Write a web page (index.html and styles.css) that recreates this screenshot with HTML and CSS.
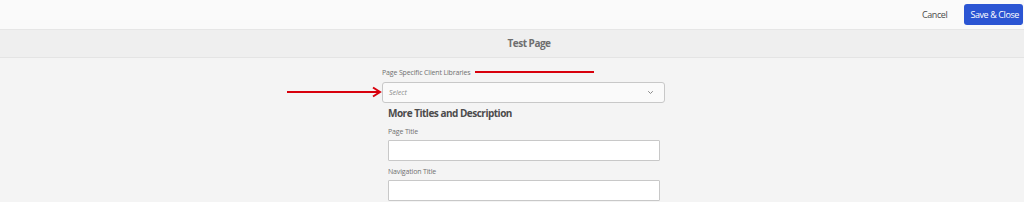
FILE: index.html
```html
<!DOCTYPE html>
<html lang="en">
<head>
  <meta charset="UTF-8">
  <title>Test Page - Properties</title>
  <link rel="stylesheet" href="styles.css">
</head>
<body>
  <div class="top-bar">
    <button class="btn-cancel">Cancel</button>
    <button class="btn-save">Save &amp; Close</button>
  </div>

  <div class="title-bar">Test Page</div>

  <div class="form-area">
    <div class="form">
      <label class="field-label">Page Specific Client Libraries</label>
      <div class="select">
        <span class="placeholder">Select</span>
        <svg class="chevron" width="7" height="5" viewBox="0 0 7 5">
          <path d="M1.2 1.2 L3.5 3.5 L5.8 1.2" fill="none" stroke="#8a8a8a" stroke-width="1"/>
        </svg>
      </div>

      <div class="section">
        <h3>More Titles and Description</h3>
        <label class="field-label">Page Title</label>
        <div class="text-input"></div>
        <label class="field-label">Navigation Title</label>
        <div class="text-input"></div>
      </div>
    </div>

    <!-- annotations -->
    <div class="mark-line"></div>
    <svg class="mark-arrow" width="96" height="12" viewBox="0 0 96 12">
      <line x1="0" y1="6" x2="92" y2="6" stroke="#d8000c" stroke-width="2"/>
      <path d="M86 1.5 L93 6 L86 10.5" fill="none" stroke="#d8000c" stroke-width="2"/>
    </svg>
  </div>
</body>
</html>
```

FILE: styles.css
```css
body {
  margin: 0;
  font-family: "Open Sans", Lato, sans-serif;
  background-color: #f4f4f4;
  color: #4b4b4b;
  overflow: hidden;
}

.top-bar {
  height: 29px;
  display: flex;
  justify-content: flex-end;
  align-items: center;
  gap: 9px;
  padding-right: 1px;
  background-color: #fafafa;
  border-bottom: 1px solid #e6e6e6;
}

.top-bar button {
  font-family: inherit;
  font-size: 9px;
  letter-spacing: -0.4px;
  border: none;
  cursor: pointer;
}

.btn-cancel {
  background: none;
  color: #4b4b4b;
  padding: 0 8px;
}

.btn-save {
  background-color: #2b55d3;
  color: #fff;
  height: 21px;
  padding: 0 4px 0 6px;
  border-radius: 3px;
}

.title-bar {
  height: 27px;
  line-height: 27px;
  text-align: center;
  font-size: 10px;
  letter-spacing: -0.5px;
  font-weight: 700;
  color: #6e6e6e;
  background-color: #efefef;
  border-bottom: 1px solid #e4e4e4;
  padding-left: 34px;
}

.form-area {
  position: relative;
  padding-top: 9px;
}

.form {
  width: 283px;
  margin-left: 382px;
}

.field-label {
  display: block;
  font-size: 7px;
  line-height: 12px;
  color: #707070;
  letter-spacing: -0.15px;
}

.select {
  margin-top: 3px;
  height: 19px;
  border: 1px solid #c8c8c8;
  border-radius: 3px;
  background-color: #fafafa;
  display: flex;
  align-items: center;
  justify-content: space-between;
  padding: 0 10px 0 6px;
}

.placeholder {
  font-size: 7px;
  font-style: italic;
  color: #8a8a8a;
}

.chevron {
  display: block;
}

.section {
  padding-left: 6px;
  width: 272px;
}

.section h3 {
  margin: 2px 0 0;
  font-size: 10px;
  letter-spacing: -0.5px;
  line-height: 16px;
  font-weight: 700;
  color: #4b4b4b;
}

.section .field-label {
  margin-top: 5px;
}

.text-input {
  margin-top: 2px;
  height: 19px;
  border: 1px solid #c8c8c8;
  border-radius: 1px;
  background-color: #fff;
}

.mark-line {
  position: absolute;
  left: 475px;
  top: 13px;
  width: 119px;
  height: 2px;
  background-color: #d8000c;
}

.mark-arrow {
  position: absolute;
  left: 287px;
  top: 28px;
}
```
